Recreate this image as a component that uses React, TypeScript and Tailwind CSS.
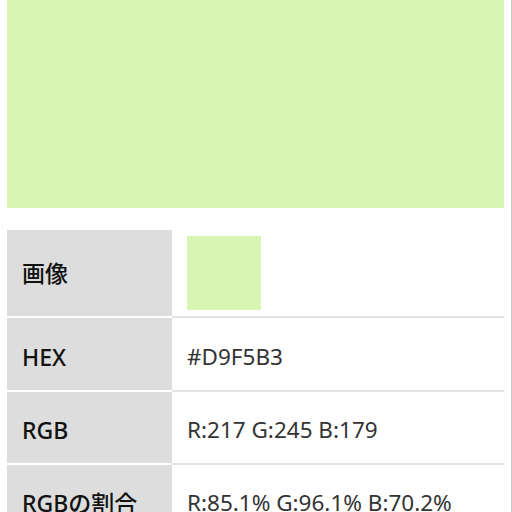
const rows: { label: string; value?: string; swatch?: boolean; h: string }[] = [
  { label: '画像', swatch: true, h: 'h-[88px]' },
  { label: 'HEX', value: '#D9F5B3', h: 'h-[74px]' },
  { label: 'RGB', value: 'R:217 G:245 B:179', h: 'h-[73px]' },
  { label: 'RGBの割合', value: 'R:85.1% G:96.1% B:70.2%', h: 'h-[73px]' },
];

export default function App() {
  return (
    <div
      className="w-[512px] h-[512px] overflow-hidden bg-white border-r border-[#c8c8c8]"
      style={{ fontFamily: '"Noto Sans", "Noto Sans CJK JP", sans-serif' }}
    >
      <div className="mx-[7px] h-[208px] bg-[#d9f5b3]" />
      <div className="mt-[22px] ml-[7px] w-[497px] flex flex-col">
        {rows.map((r) => (
          <div key={r.label} className="flex">
            <div
              className={`w-[165px] ${r.h} shrink-0 bg-[#dddddd] border-b-2 border-white flex items-center pl-[15px] ${r.swatch ? '' : 'pt-[6px]'} text-[23px] leading-none font-medium text-[#111]`}
            >
              {r.label}
            </div>
            <div
              className={`flex-1 ${r.h} border-b-2 border-[#e3e3e3] flex items-center pl-[15px] ${r.swatch ? '' : 'pt-[6px]'} text-[22.5px] leading-none text-[#333]`}
            >
              {r.swatch ? <div className="w-[74px] h-[74px] bg-[#d9f5b3]" /> : r.value}
            </div>
          </div>
        ))}
      </div>
    </div>
  );
}
